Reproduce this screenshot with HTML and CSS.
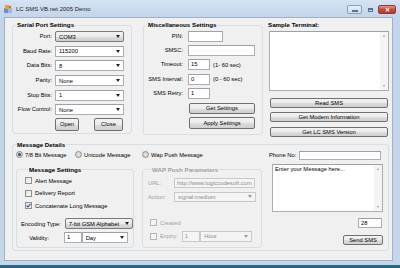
FILE: index.html
```html
<!DOCTYPE html>
<html lang="en">
<head>
    <meta charset="UTF-8">
    <title>LC SMS VB.net 2005 Demo</title>
    <link rel="stylesheet" href="styles.css">
</head>
<body>
    <div class="window">
        <div class="titlebar">
            <svg class="app-icon" width="8" height="8" viewBox="0 0 8 8">
                <rect x="0" y="3" width="4" height="5" fill="#6f8fc9"/>
                <rect x="4" y="3" width="4" height="5" fill="#9fb6de"/>
                <rect x="1" y="0" width="4" height="4" fill="#f0a030"/>
                <rect x="5" y="1" width="2" height="2" fill="#e05c2a"/>
            </svg>
            <span class="title">LC SMS VB.net 2005 Demo</span>
            <div class="caption">
                <span class="cap-btn cap-min"><i></i></span>
                <span class="cap-btn cap-max"><i></i></span>
                <span class="cap-btn cap-close">&#x2715;</span>
            </div>
        </div>

        <div class="client">
            <div class="top-row">
                <!-- Serial port -->
                <fieldset class="group serial">
                    <legend>Serial Port Settings</legend>
                    <div class="form-grid serial-grid">
                        <label>Port:</label><div class="combo combo-btn"><span>COM3</span><b></b></div>
                        <label>Baud Rate:</label><div class="combo"><span>115200</span><b></b></div>
                        <label>Data Bits:</label><div class="combo"><span>8</span><b></b></div>
                        <label>Parity:</label><div class="combo"><span>None</span><b></b></div>
                        <label>Stop Bits:</label><div class="combo"><span>1</span><b></b></div>
                        <label>Flow Control:</label><div class="combo"><span>None</span><b></b></div>
                    </div>
                    <div class="serial-buttons">
                        <div class="btn btn-open">Open</div>
                        <div class="btn btn-close">Close</div>
                    </div>
                </fieldset>

                <!-- Misc -->
                <fieldset class="group misc">
                    <legend>Miscellaneous Settings</legend>
                    <div class="form-grid misc-grid">
                        <label>PIN:</label><div><div class="textbox tb-pin"></div></div>
                        <label>SMSC:</label><div><div class="textbox tb-smsc"></div></div>
                        <label>Timeout:</label><div class="with-hint"><div class="textbox tb-num">15</div><span>(1- 60 sec)</span></div>
                        <label>SMS Interval:</label><div class="with-hint"><div class="textbox tb-num">0</div><span>(0 - 60 sec)</span></div>
                        <label>SMS Retry:</label><div><div class="textbox tb-num">1</div></div>
                    </div>
                    <div class="btn misc-btn btn-get">Get Settings</div>
                    <div class="btn misc-btn btn-apply">Apply Settings</div>
                </fieldset>

                <!-- Terminal -->
                <div class="terminal">
                    <div class="terminal-label">Sample Terminal:</div>
                    <div class="textarea terminal-box">
                        <div class="textarea-text"></div>
                        <div class="scrollbar"><b class="up"></b><b class="down"></b></div>
                    </div>
                    <div class="btn term-btn btn-read">Read SMS</div>
                    <div class="btn term-btn btn-modem">Get Modem Information</div>
                    <div class="btn term-btn btn-version">Get LC SMS Version</div>
                </div>
            </div>

            <!-- Message details -->
            <fieldset class="group details">
                <legend>Message Details</legend>
                <div class="details-body">
                    <div class="details-left">
                        <div class="radio-row">
                            <div class="radio-item"><span class="radio checked"></span>7/8 Bit Message</div>
                            <div class="radio-item"><span class="radio"></span>Unicode Message</div>
                            <div class="radio-item"><span class="radio"></span>Wap Push Message</div>
                        </div>
                        <div class="sub-groups">
                            <fieldset class="group msg-settings">
                                <legend>Message Settings</legend>
                                <div class="check-row"><span class="check"></span>Alert Message</div>
                                <div class="check-row"><span class="check"></span>Delivery Report</div>
                                <div class="check-row"><span class="check checked"><svg width="5" height="5" viewBox="0 0 5 5"><path d="M0.6 2.6 L2 4 L4.4 0.8" fill="none" stroke="#31458a" stroke-width="1.1"/></svg></span>Concatenate Long Message</div>
                                <div class="enc-row">
                                    <label>Encoding Type:</label>
                                    <div class="combo combo-btn enc-combo"><span>7-bit GSM Alphabet</span><b></b></div>
                                </div>
                                <div class="validity-row">
                                    <label>Validity:</label>
                                    <div class="textbox tb-validity">1</div>
                                    <div class="combo validity-combo"><span>Day</span><b></b></div>
                                </div>
                            </fieldset>

                            <fieldset class="group wap disabled">
                                <legend>WAP Push Parameters</legend>
                                <div class="wap-row wap-url">
                                    <label>URL:</label>
                                    <div class="textbox tb-url">http://www.logiccodesoft.com</div>
                                </div>
                                <div class="wap-row wap-action">
                                    <label>Action:</label>
                                    <div class="combo action-combo"><span>signal-medium</span><b></b></div>
                                </div>
                                <div class="check-row wap-created"><span class="check"></span>Created</div>
                                <div class="expiry-row">
                                    <span class="check"></span>
                                    <label>Expiry:</label>
                                    <div class="textbox tb-expiry">1</div>
                                    <div class="combo expiry-combo"><span>Hour</span><b></b></div>
                                </div>
                            </fieldset>
                        </div>
                    </div>

                    <div class="details-right">
                        <div class="phone-row">
                            <label>Phone No:</label>
                            <div class="textbox tb-phone"></div>
                        </div>
                        <div class="textarea message-box">
                            <div class="textarea-text">Enter your Message here...</div>
                            <div class="scrollbar"><b class="up"></b><b class="down"></b></div>
                        </div>
                        <div class="textbox tb-count">28</div>
                        <div class="btn btn-send">Send SMS</div>
                    </div>
                </div>
            </fieldset>
        </div>
    </div>
</body>
</html>
```

FILE: styles.css
```css
/* General */
* {
    margin: 0;
    padding: 0;
    box-sizing: border-box;
}

body {
    width: 400px;
    height: 268px;
    overflow: hidden;
    font-family: "Liberation Sans", Arial, sans-serif;
    font-size: 5.8px;
    color: #000;
    background: #c5d6ea;
}

label {
    white-space: nowrap;
}

/* Window frame */
.window {
    width: 400px;
    height: 268px;
    display: flex;
    flex-direction: column;
    background: linear-gradient(180deg, #d5e3f3 0, #c3d5ea 17px, #c5d6ea 100%);
    border-bottom: 3px solid #2a6782;
}

.titlebar {
    height: 17px;
    display: flex;
    align-items: center;
    padding-left: 4px;
}

.app-icon {
    display: block;
}

.title {
    margin-left: 4px;
    font-size: 6px;
    color: #1b1b1b;
}

.caption {
    margin-left: auto;
    margin-right: 4px;
    align-self: flex-start;
    margin-top: 5px;
    display: flex;
    gap: 1px;
}

.cap-btn {
    height: 9px;
    display: flex;
    align-items: center;
    justify-content: center;
    border-radius: 2px;
}

.cap-min {
    width: 15px;
    border: 1px solid #8c9fb8;
    background: linear-gradient(180deg, #e9f0f8, #cddbeb);
}

.cap-min i {
    width: 6px;
    height: 2px;
    margin-top: 2px;
    background: #5e6f86;
}

.cap-max {
    width: 14px;
}

.cap-max i {
    width: 5px;
    height: 4px;
    border: 1px solid #5e6f86;
    border-top-width: 2px;
}

.cap-close {
    width: 18px;
    border: 1px solid #8a3d36;
    background: linear-gradient(180deg, #e49a8e, #c94a3c 50%, #b8382c);
    color: #fff;
    font-size: 6px;
    font-weight: bold;
}

/* Client area */
.client {
    height: 244px;
    margin: 0 7px 0 4px;
    background: #f0f0f0;
    border: 1px solid #9fb1c5;
    padding: 3px 0 0 7px;
}

.top-row {
    display: grid;
    grid-template-columns: 120px 120px 121px;
    column-gap: 11px;
    align-items: start;
}

.top-row .terminal {
    margin-left: -6px;
}

/* Group boxes */
.group {
    border: 1px solid #d5dfe5;
    border-radius: 3px;
    min-width: 0;
}

.group legend {
    font-weight: bold;
    font-size: 6.2px;
    line-height: 8px;
    margin-left: 3px;
    padding: 0 1px;
}

.form-grid {
    display: grid;
    align-items: center;
}

.form-grid label {
    text-align: right;
    line-height: 11px;
}

/* Combo / textbox / button */
.combo {
    height: 11px;
    display: flex;
    align-items: center;
    background: #fff;
    border: 1px solid #abadb3;
    border-top-color: #9da0a6;
    padding-left: 3px;
}

.combo span {
    flex: 1;
    white-space: nowrap;
    overflow: hidden;
}

.combo b {
    width: 0;
    height: 0;
    margin-right: 3px;
    border-left: 2.5px solid transparent;
    border-right: 2.5px solid transparent;
    border-top: 3px solid #222;
}

.combo-btn {
    border: 1px solid #7a7a7a;
    border-radius: 2px;
    background: linear-gradient(180deg, #f3f3f3 0, #ebebeb 50%, #dddddd 51%, #cfcfcf 100%);
}

.textbox {
    height: 11px;
    background: #fff;
    border: 1px solid #abadb3;
    border-top-color: #9da0a6;
    padding-left: 2px;
    line-height: 9px;
    white-space: nowrap;
    overflow: hidden;
}

.btn {
    display: flex;
    align-items: center;
    justify-content: center;
    border: 1px solid #707070;
    border-radius: 2px;
    background: linear-gradient(180deg, #f2f2f2 0, #ebebeb 50%, #dddddd 51%, #cfcfcf 100%);
    white-space: nowrap;
}

/* Serial settings */
.serial {
    padding: 2px 0 2.3px 0;
}

.serial-grid {
    grid-template-columns: 39px 69px;
    grid-auto-rows: 11px;
    column-gap: 3px;
    row-gap: 3.7px;
}

.serial-buttons {
    display: flex;
    gap: 15px;
    margin: 2.8px 0 0 42px;
}

.serial-buttons .btn {
    height: 12.4px;
}

.btn-open {
    width: 24px;
}

.btn-close {
    width: 29px;
}

/* Misc settings */
.misc {
    padding: 1.7px 0 5.4px 0;
}

.misc-grid {
    grid-template-columns: 39px 72px;
    grid-auto-rows: 11px;
    column-gap: 5px;
    row-gap: 3.3px;
}

.tb-pin {
    width: 35px;
}

.tb-smsc {
    width: 67px;
}

.tb-num {
    width: 22px;
}

.with-hint {
    display: flex;
    align-items: center;
    gap: 3px;
    white-space: nowrap;
}

.misc-btn {
    width: 66px;
    height: 11.3px;
    margin-left: 45px;
}

.btn-get {
    margin-top: 3.8px;
}

.btn-apply {
    margin-top: 3.3px;
}

/* Terminal */
.terminal-label {
    font-weight: bold;
    font-size: 6.2px;
    line-height: 8px;
}

.textarea {
    display: flex;
    background: #fff;
    border: 1px solid #abadb3;
    border-top-color: #9da0a6;
}

.textarea-text {
    flex: 1;
    padding: 1px 2px;
    line-height: 7px;
}

.scrollbar {
    width: 8px;
    display: flex;
    flex-direction: column;
    justify-content: space-between;
    align-items: center;
    padding: 3px 0;
    background: #f4f4f4;
}

.scrollbar b {
    width: 0;
    height: 0;
    border-left: 1.5px solid transparent;
    border-right: 1.5px solid transparent;
}

.scrollbar .up {
    border-bottom: 2px solid #9a9a9a;
}

.scrollbar .down {
    border-top: 2px solid #9a9a9a;
}

.terminal-box {
    width: 120px;
    height: 60px;
    margin: 2px 0 0 1px;
}

.term-btn {
    width: 118px;
    height: 10px;
    margin-left: 2px;
}

.btn-read {
    margin-top: 7.3px;
}

.btn-modem {
    margin-top: 4px;
}

.btn-version {
    margin-top: 4.4px;
}

/* Message details */
.details {
    width: 377px;
    height: 110px;
    margin-top: 4.3px;
    padding-top: 2px;
}

.details-body {
    display: flex;
}

.details-left {
    width: 250px;
    padding-left: 3px;
}

.radio-row {
    display: grid;
    grid-template-columns: 59px 67px auto;
    height: 8px;
}

.radio-item {
    display: flex;
    align-items: center;
    white-space: nowrap;
}

.radio {
    width: 7px;
    height: 7px;
    border-radius: 50%;
    border: 1px solid #8e8f8f;
    background: radial-gradient(circle, #e6e6e6, #c8c8c8);
    margin-right: 2px;
    display: flex;
    align-items: center;
    justify-content: center;
}

.radio.checked::before {
    content: "";
    width: 3px;
    height: 3px;
    border-radius: 50%;
    background: #2c4a7c;
}

.sub-groups {
    display: flex;
    gap: 8px;
    margin-top: 7px;
}

.check {
    width: 7px;
    height: 7px;
    border: 1px solid #8e8f8f;
    background: linear-gradient(135deg, #e2e2e2, #fbfbfb);
    margin-right: 3px;
    display: flex;
    align-items: center;
    justify-content: center;
    flex: none;
}

.check-row {
    display: flex;
    align-items: center;
    height: 9px;
    white-space: nowrap;
}

/* Message settings group */
.msg-settings {
    width: 118px;
    height: 82px;
    padding: 2.5px 0 0 8px;
}

.msg-settings .check-row + .check-row {
    margin-top: 3.3px;
}

.enc-row,
.validity-row {
    display: flex;
    align-items: center;
    margin-left: -4px;
}

.enc-row {
    margin-top: 8px;
}

.enc-combo {
    width: 68px;
    margin-left: 4px;
}

.validity-row {
    margin-top: 3px;
}

.validity-row label {
    width: 32px;
    text-align: right;
    margin-left: -4px;
}

.tb-validity {
    width: 17.7px;
    margin-left: 15px;
}

.validity-combo {
    width: 46.3px;
}

/* WAP group */
.wap {
    width: 120px;
    height: 82px;
    padding: 4.3px 0 0 5px;
}

.disabled,
.disabled legend {
    color: #a0a0a0;
}

.disabled .textbox,
.disabled .combo {
    background: #f4f4f4;
    border-color: #c9c9c9;
    color: #8d8d8d;
}

.disabled .combo b {
    border-top-color: #9a9a9a;
}

.disabled .check {
    border-color: #b5b5b5;
    background: #f4f4f4;
}

.wap-row {
    display: flex;
    align-items: center;
}

.wap-row label {
    width: 26px;
}

.tb-url {
    width: 81px;
    height: 10px;
    line-height: 8px;
}

.wap-action {
    margin-top: 3.4px;
}

.action-combo {
    width: 82px;
    height: 10.6px;
}

.wap-created {
    margin: 16px 0 0 2px;
}

.expiry-row {
    display: flex;
    align-items: center;
    margin: 3.6px 0 0 2px;
}

.tb-expiry {
    width: 18.5px;
    margin-left: 4px;
}

.expiry-combo {
    width: 52px;
    height: 11px;
}

/* Right side */
.details-right {
    width: 120px;
    margin-left: 5px;
}

.phone-row {
    display: flex;
    align-items: center;
    padding-left: 1px;
}

.phone-row label {
    width: 30px;
}

.tb-phone {
    width: 82px;
    height: 9px;
}

.message-box {
    width: 111px;
    height: 47.7px;
    margin: 4.3px 0 0 4px;
}

.tb-count {
    width: 24px;
    height: 10.7px;
    margin: 5.6px 0 0 90px;
}

.btn-send {
    width: 40px;
    height: 10px;
    margin: 7px 0 0 75px;
}
```
